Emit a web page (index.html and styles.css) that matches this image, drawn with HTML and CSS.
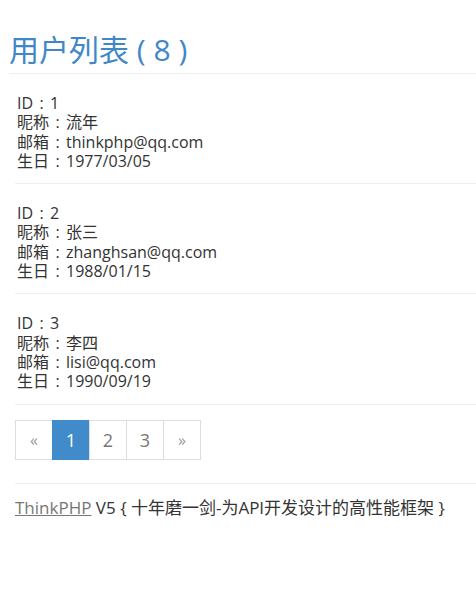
FILE: index.html
```html
<!DOCTYPE html>
<html>
   <head>
      <meta charset="utf-8">
      <title>用户列表</title>
      <link rel="stylesheet" href="styles.css">
   </head>
   <body>
      <h2 class="title">用户列表 ( 8 )</h2>
      <div class="user-list">
         <div class="user-item">
            <div>ID<span class="sep">:</span>1</div>
            <div>昵称<span class="sep">:</span>流年</div>
            <div>邮箱<span class="sep">:</span>thinkphp@qq.com</div>
            <div>生日<span class="sep">:</span>1977/03/05</div>
         </div>
         <div class="user-item">
            <div>ID<span class="sep">:</span>2</div>
            <div>昵称<span class="sep">:</span>张三</div>
            <div>邮箱<span class="sep">:</span>zhanghsan@qq.com</div>
            <div>生日<span class="sep">:</span>1988/01/15</div>
         </div>
         <div class="user-item">
            <div>ID<span class="sep">:</span>3</div>
            <div>昵称<span class="sep">:</span>李四</div>
            <div>邮箱<span class="sep">:</span>lisi@qq.com</div>
            <div>生日<span class="sep">:</span>1990/09/19</div>
         </div>
      </div>
      <ul class="pagination">
         <li class="disabled"><span>&laquo;</span></li>
         <li class="active"><span>1</span></li>
         <li><span>2</span></li>
         <li><span>3</span></li>
         <li><span>&raquo;</span></li>
      </ul>
      <div class="footer">
         <a href="#">ThinkPHP</a> V5 { 十年磨一剑-为API开发设计的高性能框架 }
      </div>
   </body>
</html>
```

FILE: styles.css
```css
         * {
         margin: 0;
         padding: 0;
         box-sizing: border-box;
         font-family: "Open Sans", "Noto Sans CJK JP", sans-serif;
         }
         body {
         background: #ffffff;
         color: #333333;
         padding-top: 30px;
         }
         .title {
         margin-left: 9px;
         font-size: 30px;
         font-weight: normal;
         color: #3f87c9;
         line-height: 40px;
         padding-bottom: 3px;
         border-bottom: 1px solid #eeeeee;
         }
         .user-list {
         margin-left: 15px;
         }
         .user-item {
         padding: 20px 2px 12px;
         font-size: 16px;
         line-height: 19.3px;
         border-bottom: 1px solid #eeeeee;
         }
         .sep {
         display: inline-block;
         width: 17px;
         text-align: center;
         }
         .pagination {
         display: flex;
         list-style: none;
         margin: 15px 0 23px 15px;
         }
         .pagination li span {
         display: block;
         width: 38px;
         height: 40px;
         line-height: 38px;
         text-align: center;
         font-size: 18px;
         color: #777777;
         border: 1px solid #dddddd;
         margin-left: -1px;
         }
         .pagination li:first-child span {
         margin-left: 0;
         }
         .pagination li.disabled span,
         .pagination li:last-child span {
         color: #999999;
         font-size: 16px;
         }
         .pagination li.active span {
         background: #428bca;
         border-color: #428bca;
         color: #ffffff;
         }
         .footer {
         margin-left: 15px;
         padding-top: 12px;
         border-top: 1px solid #eeeeee;
         font-size: 17px;
         line-height: 24px;
         }
         .footer a {
         color: #777777;
         }
```
